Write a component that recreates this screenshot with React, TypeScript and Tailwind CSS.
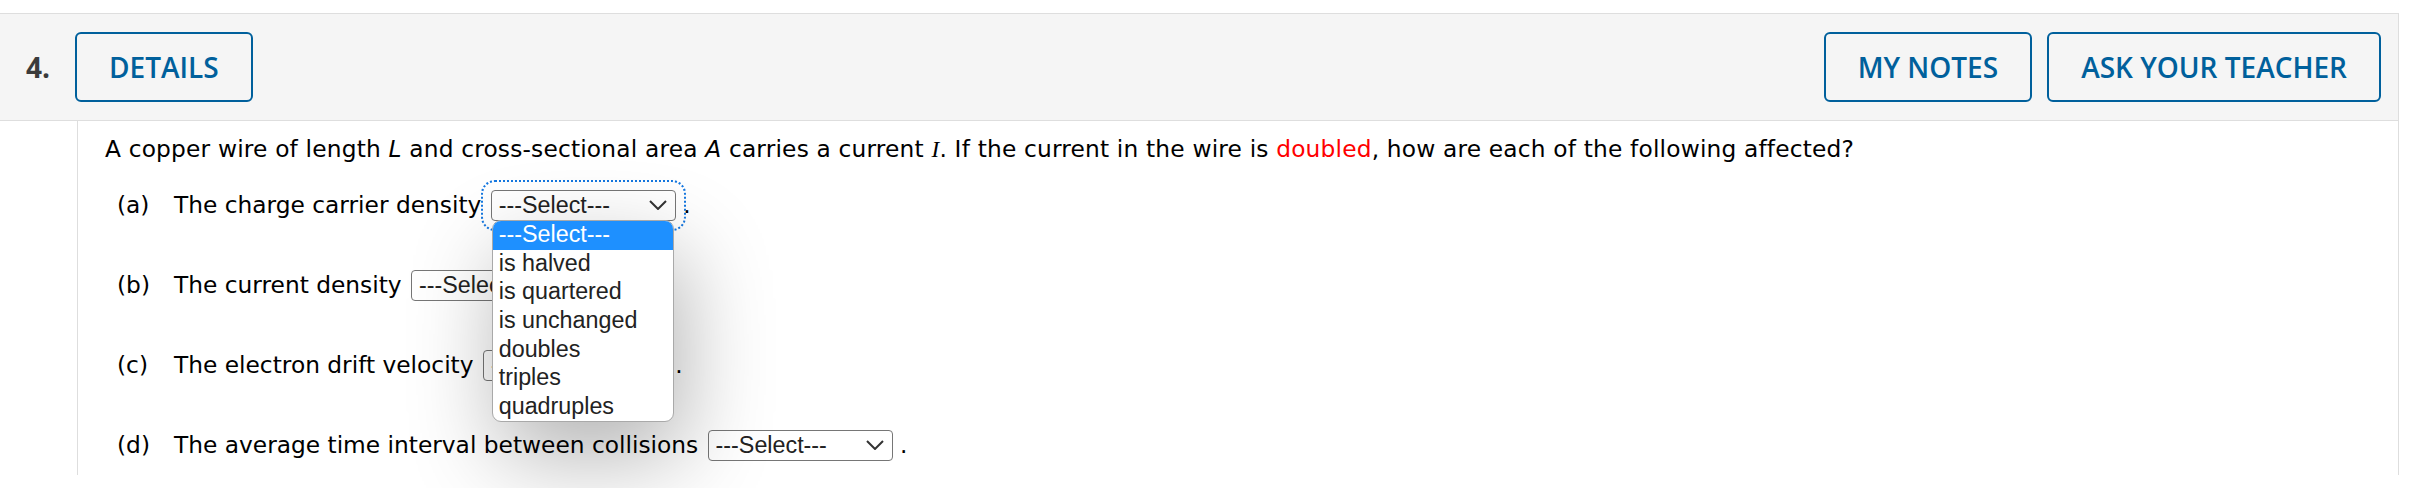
import React from "react"

const choices = ["---Select---", "is halved", "is quartered", "is unchanged", "doubles", "triples", "quadruples"]

function Chevron() {
  return (
    <svg
      className="pointer-events-none absolute right-[9px] top-[10px] h-[10px] w-[18px]"
      viewBox="0 0 18 10"
      fill="none"
      stroke="#333"
      strokeWidth="2"
    >
      <path d="M1 1 L9 9 L17 1" />
    </svg>
  )
}

function SelectBox({ open = false }: { open?: boolean }) {
  return (
    <span className="relative ml-[2px] inline-block leading-none">
      <select
        defaultValue=""
        className={
          open
            ? "h-[31px] w-[185px] appearance-none rounded-[4px] border border-[#767676] bg-white pl-[7px] font-['Liberation_Sans',Arial,sans-serif] text-[23.3px] text-[#222] outline-2 outline-dotted outline-offset-8 outline-[#1477e0]"
            : "h-[31px] w-[185px] appearance-none rounded-[4px] border border-[#767676] bg-white pl-[7px] font-['Liberation_Sans',Arial,sans-serif] text-[23.3px] text-[#222]"
        }
      >
        <option value="">---Select---</option>
        {choices.slice(1).map((c) => (
          <option key={c} value={c}>
            {c}
          </option>
        ))}
      </select>
      <Chevron />
      {open && (
        <ul className="absolute left-[1px] top-[30px] z-10 w-[182px] overflow-hidden rounded-[9px] border border-[#a9a9a9] bg-white font-['Liberation_Sans',Arial,sans-serif] text-[23.3px] text-[#222] shadow-[8px_34px_90px_rgba(0,0,0,0.3)]">
          {choices.map((c, i) => (
            <li
              key={c}
              className={
                i === 0
                  ? "h-[28.6px] bg-[#1e90ff] pl-[6px] leading-[26px] text-white"
                  : "h-[28.6px] pl-[6px] leading-[26px]"
              }
            >
              {c}
            </li>
          ))}
        </ul>
      )}
    </span>
  )
}

function Part({ tag, label, open = false, first = false }: { tag: string; label: string; open?: boolean; first?: boolean }) {
  return (
    <div className={first ? "mt-[22px] pl-[12px]" : "mt-[46px] pl-[12px]"}>
      <span className="inline-block w-[57px]">{tag}</span>
      {label} <SelectBox open={open} /> .
    </div>
  )
}

export default function App() {
  return (
    <div className="min-h-[488px] w-[2410px] bg-white pt-[13px]">
      <div className="w-[2399px]">
        {/* Header */}
        <div className="flex items-center justify-between border-y border-r border-[#dedede] bg-[#f5f5f5] py-[18px] pl-[26px] pr-[17px] font-['Open_Sans',sans-serif]">
          <div className="flex items-center gap-[25px]">
            <span className="text-[28px] font-bold text-[#3b3b3b]">4.</span>
            <button className="h-[70px] rounded-[6px] border-2 border-[#00609c] px-[32px] text-[28px] font-semibold text-[#00609c]">
              DETAILS
            </button>
          </div>
          <div className="flex items-center gap-[15px]">
            <button className="h-[70px] rounded-[6px] border-2 border-[#00609c] px-[32px] text-[28px] font-semibold text-[#00609c]">
              MY NOTES
            </button>
            <button className="h-[70px] rounded-[6px] border-2 border-[#00609c] px-[32px] text-[28px] font-semibold text-[#00609c]">
              ASK YOUR TEACHER
            </button>
          </div>
        </div>

        {/* Question body */}
        <div className="ml-[77px] h-[354px] border-x border-[#dedede] pl-[27px] pt-[11px] font-['DejaVu_Sans',Verdana,sans-serif] text-[23.3px] leading-[34px] text-black">
          <p className="tracking-[0.18px]">
            A copper wire of length <i>L</i> and cross-sectional area <i>A</i> carries a current{" "}
            <i className="font-['Liberation_Serif',serif]">I</i>. If the current in the wire is{" "}
            <span className="text-[#f00]">doubled</span>, how are each of the following affected?
          </p>
          <Part tag="(a)" label="The charge carrier density" open first />
          <Part tag="(b)" label="The current density" />
          <Part tag="(c)" label="The electron drift velocity" />
          <Part tag="(d)" label="The average time interval between collisions" />
        </div>
      </div>
    </div>
  )
}
